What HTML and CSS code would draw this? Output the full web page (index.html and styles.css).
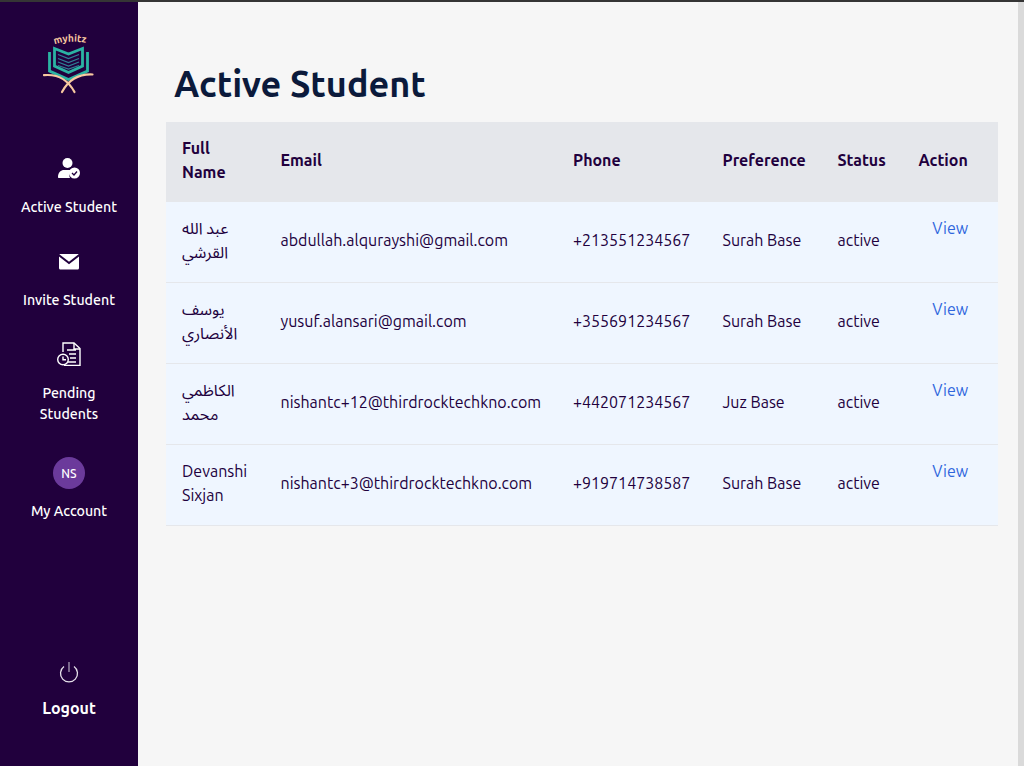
FILE: index.html
```html
<!DOCTYPE html>
<html lang="en">
<head>
<meta charset="utf-8">
<title>Active Student</title>
<link rel="stylesheet" href="styles.css">
</head>
<body>
<div class="topline"></div>
<div class="app">
  <aside class="sidebar">
    <div class="logo">
      <svg width="60" height="66" viewBox="40 30 60 66">
        <path id="arc" d="M55.500 44.500Q70 39.500 87 43" fill="none"/>
        <text class="logo-text"><textPath href="#arc">myhitz</textPath></text>
        <path d="M50.500 52v19l19 8.500 19-8.500V52" fill="none" stroke="#2bb3a3" stroke-width="2.800"/>
        <path d="M55.500 48.500l14 5.500 14-5.500V66l-14 6.500-14-6.500z" fill="#21003d" stroke="#2bb3a3" stroke-width="2.800"/>
        <path d="M59 54.500l10.500 4 10.500-4M59 58.500l10.500 4 10.500-4M59 62l10.500 4 10.500-4M59 65.500l10.500 3.500 10.500-3.500" fill="none" stroke="#2f7f95" stroke-width="1.200"/>
        <path d="M45 75.200c12-1.200 23 3 30.500 16.800M93.500 74.500c-12-.5-23 3.500-30.500 17.500" fill="none" stroke="#f8c9a0" stroke-width="2.200" stroke-linecap="round"/>
      </svg>
    </div>
    <nav class="menu">
      <a class="item">
        <svg class="icon" width="24" height="24" viewBox="0 0 24 24">
          <circle cx="10.500" cy="7" r="5" fill="#fff"/>
          <path d="M1 21c0-4.500 3-7 6-7h7c1 0 1 1 0 2-2 2-2 4-1 6H2c-.7 0-1-.4-1-1z" fill="#fff"/>
          <circle cx="17.500" cy="17" r="5.500" fill="#fff"/>
          <path d="M15 17l2 2 3-3.500" fill="none" stroke="#21003d" stroke-width="1.300"/>
        </svg>
        <span>Active Student</span>
      </a>
      <a class="item">
        <svg class="icon" width="24" height="24" viewBox="0 -1 24 24">
          <path d="M3 4h18c.4 0 .6.300.3.600L12 11.800 2.700 4.600C2.400 4.300 2.600 4 3 4z" fill="#fff"/>
          <path d="M2 6.500l10 7.800 10-7.800V18c0 .8-.5 1.500-1.500 1.500h-17C2.500 19.500 2 18.800 2 18z" fill="#fff"/>
        </svg>
        <span>Invite Student</span>
      </a>
      <a class="item">
        <svg class="icon" width="24" height="24" viewBox="0 0 24 24" fill="none" stroke="#fff" stroke-width="1.400">
          <path d="M6 10V1h11l6 5.500V23.500H7"/>
          <path d="M17 1v6h6M10 8h9M12 12h7M13 16h6M11 20h8"/>
          <circle cx="6" cy="17.500" r="5.300"/>
          <path d="M6 14.500v3.200h3"/>
        </svg>
        <span>Pending Students</span>
      </a>
      <a class="item account">
        <div class="avatar">NS</div>
        <span>My Account</span>
      </a>
    </nav>
    <a class="logout">
      <svg width="24" height="24" viewBox="0 0 24 24" fill="none" stroke-width="1.300">
        <path d="M7 6.500a8.500 8.500 0 1 0 10 0" stroke="#e6e0ea"/>
        <path d="M12 2v10" stroke="#a99db5"/>
      </svg>
      <span>Logout</span>
    </a>
  </aside>
  <main class="content">
    <h1>Active Student</h1>
    <table>
      <thead>
        <tr>
          <th class="col-name">Full Name</th>
          <th class="col-email">Email</th>
          <th class="col-phone">Phone</th>
          <th class="col-pref">Preference</th>
          <th class="col-status">Status</th>
          <th>Action</th>
        </tr>
      </thead>
      <tbody>
        <tr>
          <td>عبد الله القرشي</td>
          <td>abdullah.alqurayshi@gmail.com</td>
          <td>+213551234567</td>
          <td>Surah Base</td>
          <td>active</td>
          <td class="c-action"><a>View</a></td>
        </tr>
        <tr>
          <td>يوسف الأنصاري</td>
          <td>yusuf.alansari@gmail.com</td>
          <td>+355691234567</td>
          <td>Surah Base</td>
          <td>active</td>
          <td class="c-action"><a>View</a></td>
        </tr>
        <tr>
          <td>الكاظمي محمد</td>
          <td>nishantc+12@thirdrocktechkno.com</td>
          <td>+442071234567</td>
          <td>Juz Base</td>
          <td>active</td>
          <td class="c-action"><a>View</a></td>
        </tr>
        <tr>
          <td>Devanshi Sixjan</td>
          <td>nishantc+3@thirdrocktechkno.com</td>
          <td>+919714738587</td>
          <td>Surah Base</td>
          <td>active</td>
          <td class="c-action"><a>View</a></td>
        </tr>
      </tbody>
    </table>
  </main>
  <div class="scrollbar"></div>
</div>
</body>
</html>
```
FILE: styles.css
```css
* { box-sizing: border-box; }
html, body { margin: 0; height: 100%; overflow: hidden; }
body { font-family: Ubuntu, "Noto Sans Arabic", "Noto Naskh Arabic", sans-serif; background: #f6f6f6; color: #21003d; display: flex; flex-direction: column; }
.topline { height: 2px; background: #353535; flex: none; }
.app { flex: 1; display: flex; min-height: 0; }
.sidebar { width: 138px; flex: none; background: #21003d; color: #fff; display: flex; flex-direction: column; align-items: center; }
.logo { height: 112px; padding-top: 28px; display: flex; justify-content: center; }
.logo-text { font-size: 10px; font-weight: 700; fill: #f8c9a0; }
.menu { display: flex; flex-direction: column; width: 100%; padding-top: 42px; }
.item { display: flex; flex-direction: column; align-items: center; text-align: center; font-size: 14.200px; line-height: 21px; font-weight: 500; padding: 0 16px 31px; }
.item .icon { margin-bottom: 17px; }
.account { margin-top: 1px; }
.avatar { width: 32px; height: 32px; border-radius: 50%; background: #6b3a9b; display: flex; align-items: center; justify-content: center; font-size: 12px; margin-bottom: 12px; }
.logout { margin-top: auto; margin-bottom: 46px; display: flex; flex-direction: column; align-items: center; gap: 12px; font-size: 16px; line-height: 24px; font-weight: 700; }
.content { flex: 1; min-width: 0; padding: 0 20px 0 28px; }
h1 { margin: 57px 0 0 8px; font-size: 36px; line-height: 50px; font-weight: 700; color: #0b1a3b; height: 63px; }
table { width: 832px; table-layout: fixed; border-collapse: separate; border-spacing: 0; font-size: 16px; line-height: 24px; }
th { background: #e5e7eb; font-weight: 700; text-align: left; padding: 14px 16px 18px; height: 80px; }
td { background: #eff6ff; padding: 14px 16px 18px; border-bottom: 1px solid #e5e7eb; height: 81px; font-weight: 400; }
.col-name { width: 98.500px; }
.col-email { width: 292.500px; }
.col-phone { width: 149.500px; }
.col-pref { width: 115px; }
.col-status { width: 81px; }
.c-action { vertical-align: top; text-align: center; }
.c-action a { color: #2f66dd; }
.scrollbar { width: 6px; flex: none; background: #dadada; }
```
